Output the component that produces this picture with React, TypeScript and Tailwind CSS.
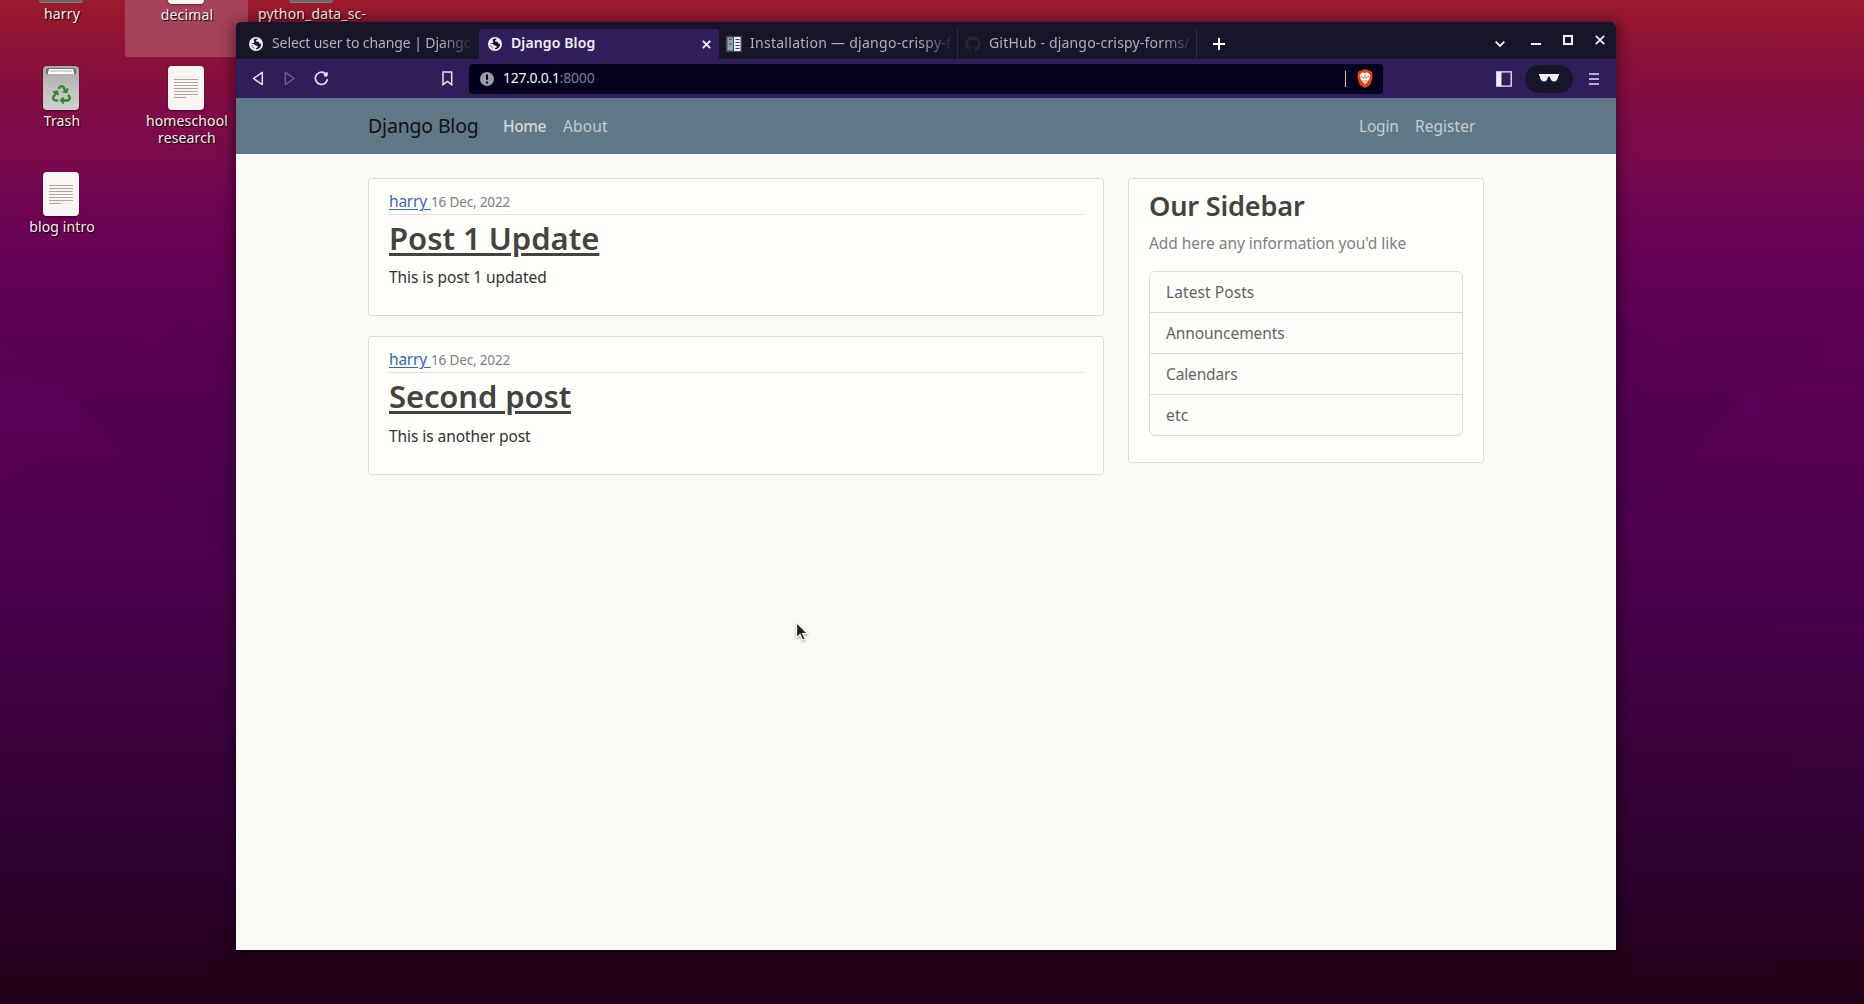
import React from "react";
import { FaRecycle, FaGithub } from "react-icons/fa";

function DocIcon() {
  return (
    <svg width="36" height="44" viewBox="0 0 36 44" className="block drop-shadow-[0_1px_1px_rgba(0,0,0,0.45)]">
      <rect width="36" height="44" rx="4" fill="#f8f5f3" />
      <path d="M6 13.5h24M6 16.5h24M6 19.5h24M6 22.5h24M6 25.5h24M6 28.5h24M6 31.5h12" stroke="#aaa8a6" />
    </svg>
  );
}

function FolderIcon() {
  return <div className="h-11 w-11 rounded-[3px] border-b border-[#8b7f7d] bg-[#6b6664]" />;
}

function TrashIcon() {
  return (
    <div className="relative h-11 w-9">
      <svg width="36" height="44" viewBox="0 0 36 44" className="block drop-shadow-[0_1px_1px_rgba(0,0,0,0.5)]">
        <defs>
          <linearGradient id="bin" x1="0" y1="0" x2="0" y2="1">
            <stop offset="0" stopColor="#a9a9a7" />
            <stop offset="0.6" stopColor="#c4c4c2" />
            <stop offset="1" stopColor="#cececc" />
          </linearGradient>
        </defs>
        <rect width="36" height="44" rx="4" fill="url(#bin)" />
        <rect x="3" y="2" width="30" height="7" rx="2.5" fill="#6f6f6d" />
        <path d="M6 3h24l1.500 5.500h-27z" fill="#fbfbf9" />
        <path d="M7 5h21l1 1.500" stroke="#a9a9a7" fill="none" />
      </svg>
      <FaRecycle className="absolute top-[19px] left-[9px] text-[#2e8b2a]" size={19} />
    </div>
  );
}

function DesktopItem({ place, icon, lines }: { place: string; icon: React.ReactNode; lines: React.ReactNode }) {
  return (
    <div className={"absolute flex w-[122px] flex-col items-center " + place}>
      {icon}
      <div className="mt-[2px] ml-[2px] text-center text-[14px] leading-[17px] tracking-[0.14px] whitespace-pre text-[#f4f0f0] [text-shadow:1px_1px_1px_#000]">
        {lines}
      </div>
    </div>
  );
}

function GlobeIcon() {
  return (
    <svg width="14" height="14" viewBox="0 0 14 14" className="block shrink-0">
      <circle cx="7" cy="7" r="7" fill="#f3f3f5" />
      <path
        d="M5 2.200C6 1.300 7.500 1.300 8.600 1.700 8.300 2.600 7.800 2.700 7.200 3.300c-.5.600-.2 1.200.6 1.300 1.200.1 2.100.4 2.400 1.300.2.900.9 1 1.900.9.300 1.700-.6 3.600-2.200 4.600-.9.500-1.900.9-2.900.8-.3-.9.500-1.200 1.300-1.600.8-.5.600-1.200-.1-1.600C7 8.400 5.600 8.500 5.300 7.600 5.100 7 4 6.900 2 6.800c.5-.7 1.700-.6 2.700-.9.800-.3.600-1.200.2-1.900-.3-.6-.4-1.300.1-1.800z"
        fill="#1b1631"
      />
      <path d="M1.800 7.600c1.200.1 1.900.7 2.300 1.500.4.900 1.300 1.200 1.600 2.100.1.500-.2.800-.6.900C3.200 11.400 1.900 9.600 1.800 7.600z" fill="#1b1631" opacity=".35" />
    </svg>
  );
}

function DocsIcon() {
  return (
    <svg width="16" height="16" viewBox="0 0 16 16" className="block shrink-0">
      <rect width="16" height="16" fill="#3f4c50" />
      <rect x="1.500" y="1.500" width="5.500" height="13" fill="#8fa5b1" />
      <rect x="8" y="1" width="6.500" height="14" fill="#e9efec" />
      <path d="M3 3.500h2.500M3 8h2.500M9.500 3.500h4M9.500 6.500h4M9.500 9.500h4M9.500 12.500h4" stroke="#33444c" strokeWidth="1.200" />
    </svg>
  );
}

function BraveIcon() {
  return (
    <svg width="16" height="19" viewBox="0 0 16 19" className="block shrink-0">
      <path d="M4.300 1.800 5.600.4h4.800l1.300 1.400 1.700-.2 2.200 2.500-.5 1.700.6 1.600-1.900 7c-.3 1-.8 1.500-1.500 2L8 18.900l-4.300-2.500c-.7-.5-1.200-1-1.500-2L.3 7.400l.6-1.600-.5-1.700 2.200-2.500z" fill="#e8400f" />
      <path d="M8 4 5.300 3.500 2.400 6.400l1.100 2.100-.1 1.500 2 2 .7 1.600L8 15l1.900-1.400.7-1.600 2-2-.1-1.500 1.100-2.100-2.900-2.900z" fill="#fff" />
      <path d="M4 7.500l2.300.6L7 10M12 7.500l-2.300.6L9 10M6.300 11.500 8 12.300l1.700-.8M8 5v4" stroke="#e8400f" strokeWidth=".8" fill="none" />
    </svg>
  );
}

const tabText = "block min-w-0 overflow-hidden text-[14px] leading-[28px] pb-[2px] whitespace-nowrap";
const fadedText = "text-[#b2b0ba] [mask-image:linear-gradient(to_right,#000_calc(100%_-_34px),transparent_100%)]";

function TabStrip() {
  return (
    <div className="flex h-[37px] rounded-t-[4px] bg-[#191528]">
      <div className="flex flex-1 items-start pt-[7px]">
        <div className="flex h-[30px] w-[243px] items-center pl-[13px]">
          <GlobeIcon />
          <span className={tabText + " " + fadedText + " ml-[9px] w-[202px] tracking-[-0.1px]"}>Select user to change | Django</span>
        </div>
        <div className="flex h-[30px] w-[240px] items-center rounded-t-[3px] bg-[#2f1e5a] pl-[9px]">
          <GlobeIcon />
          <span className={tabText + " ml-[9px] flex-1 font-semibold tracking-[0.12px] text-[#f2f0f8]"}>Django Blog</span>
          <svg width="9" height="9" viewBox="0 0 9 9" className="mr-[8px] block">
            <path d="M.8.8l7.400 7.400M8.200.8.8 8.200" stroke="#f2f0f8" strokeWidth="1.900" />
          </svg>
        </div>
        <div className="flex h-[30px] w-[239px] items-center border-r border-[#2f2652] pl-[7px]">
          <DocsIcon />
          <span className={tabText + " " + fadedText + " ml-[8px] w-[205px] tracking-[0.27px]"}>Installation — django-crispy-f</span>
        </div>
        <div className="flex h-[30px] w-[239px] items-center border-r border-[#2f2652] pl-[7px]">
          <FaGithub size={16} className="shrink-0 text-[#24292e]" />
          <span className={tabText + " " + fadedText + " ml-[8px] w-[206px] tracking-[0.18px]"}>GitHub - django-crispy-forms/</span>
        </div>
        <svg width="12" height="12" viewBox="0 0 12 12" className="mt-[9px] ml-[16px] block">
          <path d="M6 0v12M0 6h12" stroke="#fff" strokeWidth="2" />
        </svg>
      </div>
      <div className="flex items-start pr-[11px]">
        <svg width="10" height="6" viewBox="0 0 10 6" className="mt-[19px] block">
          <path d="M.7.700 5 5 9.300.7" stroke="#f0eff3" strokeWidth="1.800" fill="none" />
        </svg>
        <div className="mt-[21px] ml-[26px] h-[2px] w-[10px] bg-[#f0eff3]" />
        <div className="mt-[13px] ml-[22px] h-[10px] w-[10px] border-2 border-[#f0eff3]" />
        <svg width="10" height="10" viewBox="0 0 10 10" className="mt-[13px] ml-[22px] block">
          <path d="M.8.800l8.400 8.400M9.200.8.8 9.200" stroke="#f0eff3" strokeWidth="1.700" />
        </svg>
      </div>
    </div>
  );
}

function Toolbar() {
  return (
    <div className="flex h-[39px] items-center bg-[#2f1e5a] text-[#e4e1ee]">
      <svg width="12" height="15" viewBox="0 0 12 15" className="ml-[16px] block">
        <path d="M10.300 1.400v12.200L1.500 7.500z" fill="none" stroke="currentColor" strokeWidth="1.500" strokeLinejoin="round" />
      </svg>
      <svg width="12" height="15" viewBox="0 0 12 15" className="ml-[20px] block text-[#6d6190]">
        <path d="M1.300 1.400v12.200l8.800-6.100z" fill="none" stroke="currentColor" strokeWidth="1.400" strokeLinejoin="round" />
      </svg>
      <svg width="15" height="15" viewBox="0 0 15 15" className="ml-[18px] block">
        <path d="M10.600 2.100A6.100 6.100 0 1 0 13.500 8.200" fill="none" stroke="currentColor" strokeWidth="1.700" />
        <path d="M9.800 2.200c1.500-1 2.800-1.300 3.900-.7.400 1.300.2 2.700-.6 4.100-1 .4-2 .2-3.100-.5z" fill="currentColor" />
      </svg>
      <svg width="11" height="15" viewBox="0 0 11 15" className="ml-[113px] block">
        <path d="M1 1h8.700v12.700L5.400 10.500 1 13.700z" fill="none" stroke="currentColor" strokeWidth="1.500" />
      </svg>
      <div className="ml-[16px] flex h-[30px] w-[914px] items-center rounded-[4px] bg-[#05001e] pl-[11px]">
        <svg width="14" height="14" viewBox="0 0 14 14" className="block">
          <circle cx="7" cy="7" r="7" fill="#9d9ba6" />
          <path d="M7 2.500v5.200M7 9.500v2" stroke="#05001e" strokeWidth="2" />
        </svg>
        <span className="mb-[2px] ml-[9px] text-[14px] leading-[28px] tracking-[-0.3px] text-[#f4f3f7]">
          127.0.0.1<span className="tracking-[-0.17px] text-[#807c92]">:8000</span>
        </span>
        <div className="mr-[11px] ml-auto h-4 w-px bg-[#cac8d2]" />
        <div className="mr-[10px]">
          <BraveIcon />
        </div>
      </div>
      <svg width="16" height="16" viewBox="0 0 16 16" className="ml-[113px] block">
        <path d="M.8.800h14.400v14.400H.8z" fill="none" stroke="#f1eff6" strokeWidth="1.300" />
        <path d="M1 1h4.500v14H1z" fill="#f1eff6" />
      </svg>
      <div className="ml-[13px] flex h-[28px] w-[48px] items-center justify-center rounded-full bg-[#191528]">
        <svg width="20" height="8" viewBox="0 0 20 8" className="mb-px block">
          <path d="M0 0h20v1.500l-.8.500C19 5.500 17.500 7.500 15 7.500c-2.400 0-3.600-2-4-4.500-.5-.7-1.500-.7-2 0-.4 2.500-1.600 4.500-4 4.500C2.500 7.500 1 5.500.8 2L0 1.500z" fill="#eeedf2" />
        </svg>
      </div>
      <div className="ml-[16px] flex w-[10px] flex-col gap-[3px]">
        <div className="h-[2px] bg-[#b6b1c5]" />
        <div className="h-[2px] bg-[#b6b1c5]" />
        <div className="h-[2px] bg-[#b6b1c5]" />
      </div>
    </div>
  );
}

function Post({ title, body, titleSpacing }: { title: string; body: string; titleSpacing: string }) {
  return (
    <article className="mb-5 rounded-[3px] border border-[#dcddda] bg-[#fffffc] px-5 py-[10px]">
      <div className="mb-1 h-[26px] border-b border-[#e0e1de] text-[15.5px] leading-6 tracking-[-0.2px]">
        <a className="inline-block w-[42px] whitespace-pre text-[#3867b5] underline underline-offset-[2px]">harry </a>
        <small className="text-[13.6px] text-[#7b8184]">16 Dec, 2022</small>
      </div>
      <h2 className={"mb-2 text-[31px] leading-[38.4px] font-[560] text-[#444340] underline decoration-[3px] underline-offset-[3px] " + titleSpacing}>{title}</h2>
      <p className="mb-4 text-[15.5px] leading-6 tracking-[-0.07px] text-[#333330]">{body}</p>
    </article>
  );
}

const items = [
  { label: "Latest Posts", spacing: "tracking-[0.08px]" },
  { label: "Announcements", spacing: "tracking-[-0.08px]" },
  { label: "Calendars", spacing: "tracking-[-0.15px]" },
  { label: "etc", spacing: "tracking-[0.2px]" },
];

function Sidebar() {
  return (
    <aside className="w-[356px] self-start rounded-[3px] border border-[#dcddda] bg-[#fffffc] px-5 py-[10px]">
      <h3 className="mb-2 text-[27.2px] leading-[33.6px] font-[560] tracking-[-0.22px] text-[#444340]">Our Sidebar</h3>
      <p className="mb-4 text-[15.5px] leading-6 tracking-[-0.05px] text-[#7b8184]">Add here any information you'd like</p>
      <ul className="mb-4 overflow-hidden rounded-[6px] border border-[#dcddda] bg-[#fdfefa]">
        {items.map((item) => (
          <li key={item.label} className={"border-b border-[#dcddda] px-4 py-2 text-[15.5px] leading-6 text-[#646462] last:border-b-0 " + item.spacing}>
            {item.label}
          </li>
        ))}
      </ul>
    </aside>
  );
}

export default function App() {
  return (
    <div className="relative h-[1004px] w-[1864px] overflow-hidden bg-[linear-gradient(to_bottom,#9c1a2c_0px,#8c1236_50px,#800c46_110px,#780a4c_160px,#6c0352_215px,#5f0055_300px,#580055_400px,#4d004f_540px,#420044_660px,#38003a_760px,#2f0030_870px,#27001f_945px,#22001a_1004px)] font-['Noto_Sans',sans-serif]">
      <svg width="1864" height="1004" className="absolute inset-0 block">
        <path d="M80 405 188 318 240 370V570z" fill="#30004c" opacity=".12" />
        <path d="M1616 310 1740 400 1616 530z" fill="#30004c" opacity=".12" />
        <path d="M1740 430 1864 540V300z" fill="#800060" opacity=".05" />
        <path d="M0 340 90 420 0 485z" fill="#800060" opacity=".06" />
      </svg>
      <div className="absolute top-0 left-[125px] h-[57px] w-[123px] rounded-b-[3px] bg-[#a6425a]" />
      <DesktopItem place="top-[-41px] left-0" icon={<FolderIcon />} lines="harry" />
      <DesktopItem place="top-[-40px] left-[125px]" icon={<DocIcon />} lines="decimal" />
      <DesktopItem place="top-[-41px] left-[250px]" icon={<FolderIcon />} lines="python_data_sc-" />
      <DesktopItem place="top-[66px] left-0" icon={<TrashIcon />} lines="Trash" />
      <DesktopItem place="top-[66px] left-[125px]" icon={<DocIcon />} lines={"homeschool\nresearch"} />
      <DesktopItem place="top-[172px] left-0" icon={<DocIcon />} lines="blog intro" />

      <main className="absolute top-[22px] left-[236px] flex h-[928px] w-[1380px] flex-col rounded-t-[4px] bg-[#f9faf6] shadow-[0_2px_14px_2px_rgba(0,0,0,0.5)]">
        <TabStrip />
        <Toolbar />
        <nav className="flex h-[56px] items-center bg-[#5f7885] pr-[139px] pl-[132px] text-[15.5px] leading-[56px] text-[#c3ced3]">
          <span className="w-[135px] text-[19.4px] tracking-[-0.12px] text-[#0d1114]">Django Blog</span>
          <span className="w-[60px] font-medium tracking-[-0.4px] text-[#d0d8dc]">Home</span>
          <span className="tracking-[0.15px]">About</span>
          <span className="ml-auto w-[56px] tracking-[-0.2px]">Login</span>
          <span className="w-[62px] tracking-[0.05px]">Register</span>
        </nav>
        <div className="flex gap-6 px-[132px] pt-6">
          <section className="w-[736px]">
            <Post title="Post 1 Update" body="This is post 1 updated" titleSpacing="tracking-[-0.03px]" />
            <Post title="Second post" body="This is another post" titleSpacing="tracking-[-0.13px]" />
          </section>
          <Sidebar />
        </div>
      </main>

      <svg width="16" height="22" viewBox="0 0 16 22" className="absolute top-[621px] left-[795px] block drop-shadow-[0_1px_1px_rgba(0,0,0,0.35)]">
        <path d="M1.500 1.500v15.300l3.600-3.300 2.500 5.700 2.600-1.100-2.500-5.600h4.800z" fill="#20201f" stroke="#fff" strokeWidth="1.200" />
      </svg>
    </div>
  );
}
